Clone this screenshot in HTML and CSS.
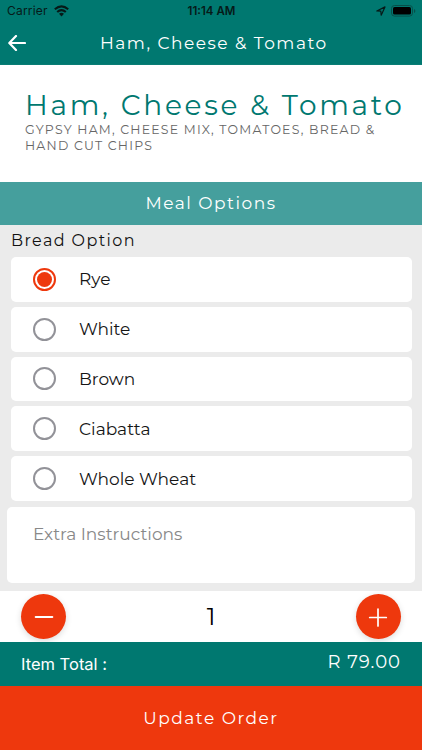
FILE: index.html
```html
<!DOCTYPE html>
<html lang="en">
<head>
<meta charset="utf-8">
<title>Ham, Cheese &amp; Tomato</title>
<link rel="stylesheet" href="styles.css">
</head>
<body>
<header class="top">
  <div class="status">
    <div class="carrier"><span>Carrier</span>
      <svg width="15" height="12" viewBox="0 0 15 12"><g fill="none" stroke="#061a18" stroke-width="2.1"><path d="M.8 4.2Q7.5-1.6 14.2 4.2"/><path d="M3.2 7Q7.5 3.1 11.8 7"/></g><path d="M7.5 11.4 5 8.7q2.5-1.9 5 0z" fill="#061a18"/></svg>
    </div>
    <span class="time">11:14 AM</span>
    <div class="power">
      <svg width="10" height="10" viewBox="0 0 10 10"><path d="M.8 5 9 .9 5.2 9.2 4.8 5.2z" fill="none" stroke="#061a18" stroke-width="1.2" stroke-linejoin="round"/></svg>
      <svg class="battery" width="25" height="12" viewBox="0 0 25 12"><rect x=".5" y=".5" width="21" height="10.6" rx="3" fill="none" stroke="#07504a"/><rect x="2" y="2" width="18" height="7.6" rx="1.6" fill="#000"/><path d="M23 4v4q1.4-.6 1.4-2T23 4z" fill="#07504a"/></svg>
    </div>
  </div>
  <div class="nav">
    <svg class="back" width="18" height="16" viewBox="0 0 18 16"><path d="M8 1 1.3 8 8 15M1.5 8H17" fill="none" stroke="#fff" stroke-width="2.2" stroke-linecap="round" stroke-linejoin="round"/></svg>
    <span class="nav-title">Ham, Cheese &amp; Tomato</span>
  </div>
</header>
<section class="intro">
  <h1>Ham, Cheese &amp; Tomato</h1>
  <p>GYPSY HAM, CHEESE MIX, TOMATOES, BREAD &amp;<br>HAND CUT CHIPS</p>
</section>
<h2 class="section">Meal Options</h2>
<main class="options">
  <h3>Bread Option</h3>
  <ul>
    <li><span class="radio on"></span><span class="label rye">Rye</span></li>
    <li><span class="radio"></span><span class="label">White</span></li>
    <li><span class="radio"></span><span class="label">Brown</span></li>
    <li><span class="radio"></span><span class="label">Ciabatta</span></li>
    <li><span class="radio"></span><span class="label">Whole Wheat</span></li>
  </ul>
  <div class="extra">Extra Instructions</div>
</main>
<div class="quantity">
  <span class="round"><svg width="20" height="20" viewBox="0 0 20 20"><path d="M1.7 10H18.3" stroke="#fff" stroke-width="2" stroke-linecap="round"/></svg></span>
  <span class="count">1</span>
  <span class="round"><svg width="20" height="20" viewBox="0 0 20 20"><path d="M1.7 10.5H18.3M10 2V19" stroke="#fff" stroke-width="1.7" stroke-linecap="round"/></svg></span>
</div>
<div class="total"><span class="total-label">Item Total :</span><span class="price">R 79.00</span></div>
<footer class="update"><span>Update Order</span></footer>
</body>
</html>
```
FILE: styles.css
```css
* { box-sizing: border-box; }
body {
  margin: 0;
  width: 422px;
  height: 750px;
  overflow: hidden;
  display: flex;
  flex-direction: column;
  background: #fff;
  font-family: Montserrat, Inter, sans-serif;
  white-space: nowrap;
}
h1, h2, h3, p, ul { margin: 0; padding: 0; font-weight: 400; }
svg { display: block; }
.top { height: 65px; flex: none; background: #007870; border-bottom: 1px solid #0a7d75; }
.status {
  height: 22px;
  display: grid;
  grid-template-columns: 1fr auto 1fr;
  align-items: center;
  padding: 0 6px 0 7px;
  color: #061a18;
  font: 12px/22px Inter, sans-serif;
}
.carrier { display: flex; align-items: center; gap: 6px; letter-spacing: .2px; }
.time { font-weight: 600; font-size: 11.5px; }
.power { display: flex; align-items: center; justify-content: flex-end; gap: 5px; }
.nav { height: 42px; display: flex; align-items: center; padding: 0 8px; color: #fff; }
.nav-title { margin-left: 74px; font-size: 17px; letter-spacing: 1.5px; }
.intro { height: 117px; flex: none; padding: 23px 0 0 25px; }
h1 { font-size: 28px; line-height: 34px; letter-spacing: 2.7px; color: #007870; }
.intro p { font-size: 12.5px; line-height: 16px; letter-spacing: 1.2px; color: #666; }
.section {
  height: 43px;
  flex: none;
  background: #459f9d;
  color: #fff;
  font-size: 17px;
  line-height: 43px;
  letter-spacing: 1.5px;
  text-align: center;
}
.options { height: 366px; flex: none; background: #ebebeb; }
h3 { height: 32px; padding-left: 11px; font-size: 16px; line-height: 32px; letter-spacing: 1.4px; color: #111; }
ul { list-style: none; display: grid; gap: 5px; padding: 0 10.5px; }
li { height: 44.8px; display: flex; align-items: center; padding-left: 22.5px; background: #fff; border-radius: 5px; }
.radio { width: 23px; height: 23px; border: 2px solid #929298; border-radius: 50%; }
.radio.on { border-color: #ee380d; background: #ee380d; background-clip: content-box; padding: 2px; }
.label { margin-left: 23px; font-size: 17px; color: #151515; }
.extra {
  height: 76px;
  margin: 6px 7px 0;
  padding: 16px 26px;
  border-radius: 5px;
  background: #fff;
  color: #888;
  font-size: 17px;
  line-height: 22px;
}
.quantity { height: 51px; flex: none; display: flex; align-items: center; justify-content: space-between; padding: 0 21px; }
.round {
  width: 45px;
  height: 45px;
  display: grid;
  place-items: center;
  border-radius: 50%;
  background: #ee380d;
  box-shadow: 0 2px 6px rgba(0, 0, 0, .14);
}
.count { font-size: 24px; color: #000; }
.total { height: 44px; flex: none; display: flex; justify-content: space-between; padding: 0 21px; background: #007870; color: #fff; }
.total-label { font: 16.5px/45px Inter, sans-serif; }
.price { font-size: 18px; line-height: 40px; letter-spacing: 1px; }
.update { height: 64px; flex: none; background: #ee380d; color: #fff; font-size: 17px; line-height: 64px; letter-spacing: 1.5px; text-align: center; }
```
